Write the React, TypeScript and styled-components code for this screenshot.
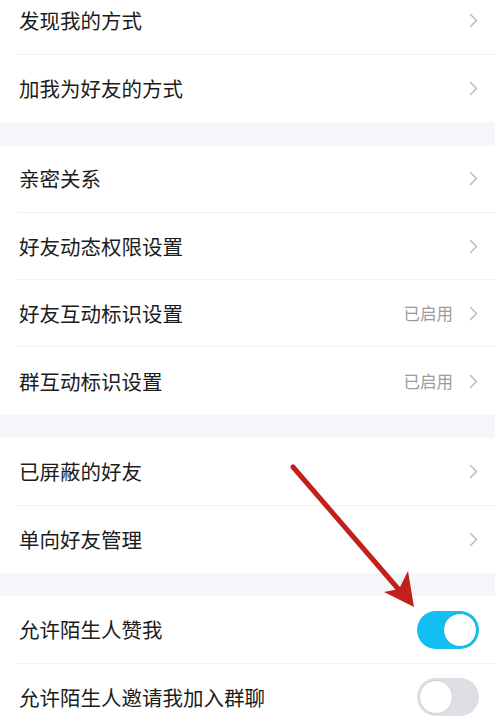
import React from "react";
import styled, { createGlobalStyle } from "styled-components";

const Global = createGlobalStyle`
  html, body { margin: 0; padding: 0; background: #ffffff; overflow: hidden; }
  body { font-family: "Noto Sans CJK SC", "Noto Sans", sans-serif; }
`;

const Page = styled.div`
  position: relative;
  width: 495px;
  height: 728px;
  overflow: hidden;
  background: #ffffff;
`;

const List = styled.div`
  margin-top: -12.5px;
  display: flex;
  flex-direction: column;
`;

const Group = styled.div`
  display: flex;
  flex-direction: column;
  background: #ffffff;
`;

const GroupGap = styled.div`
  height: 23.5px;
  background: #f5f6fa;
`;

const Row = styled.div`
  height: 67.3px;
  padding-left: 18px;
  display: flex;
  box-sizing: border-box;
`;

const RowBody = styled.div<{ $last?: boolean; $toggle?: boolean }>`
  flex: 1;
  display: flex;
  align-items: center;
  padding-left: 1px;
  padding-right: ${p => (p.$toggle ? "16px" : "17px")};
  border-bottom: ${p => (p.$last ? "none" : "1px solid #f0f0f3")};
  box-sizing: border-box;
`;

const Label = styled.span`
  flex: 1;
  font-size: 20.5px;
  color: #1c1c1c;
  padding-bottom: 1px;
`;

const Value = styled.span`
  font-size: 16.5px;
  color: #9b9b9f;
  margin-right: 16px;
  padding-bottom: 1px;
`;

const Track = styled.div<{ $on: boolean }>`
  width: 62px;
  height: 38px;
  border-radius: 19px;
  background: ${p => (p.$on ? "#12bff0" : "#dedee5")};
  display: flex;
  align-items: center;
  justify-content: ${p => (p.$on ? "flex-end" : "flex-start")};
  padding: 2px;
  box-sizing: border-box;
`;

const Knob = styled.div<{ $on: boolean }>`
  width: 34px;
  height: 34px;
  border-radius: 50%;
  background: #ffffff;
  box-sizing: border-box;
  border: 1px solid ${p => (p.$on ? "#0fb3e2" : "#cfcfd6")};
`;

const ArrowLayer = styled.svg`
  position: absolute;
  left: 0;
  top: 0;
  pointer-events: none;
`;

const Chevron = () => (
  <svg width="9" height="15" viewBox="0 0 9 15">
    <polyline
      points="1.5,1.5 7.5,7.5 1.5,13.5"
      fill="none"
      stroke="#bdbdc2"
      strokeWidth="1.6"
      strokeLinecap="round"
      strokeLinejoin="round"
    />
  </svg>
);

type Item = { label: string; value?: string; toggle?: boolean; on?: boolean };

const groups: Item[][] = [
  [{ label: "发现我的方式" }, { label: "加我为好友的方式" }],
  [
    { label: "亲密关系" },
    { label: "好友动态权限设置" },
    { label: "好友互动标识设置", value: "已启用" },
    { label: "群互动标识设置", value: "已启用" },
  ],
  [{ label: "已屏蔽的好友" }, { label: "单向好友管理" }],
  [
    { label: "允许陌生人赞我", toggle: true, on: true },
    { label: "允许陌生人邀请我加入群聊", toggle: true, on: false },
  ],
];

export default function App() {
  return (
    <Page>
      <Global />
      <List>
        {groups.map((g, gi) => (
          <React.Fragment key={gi}>
            {gi > 0 && <GroupGap />}
            <Group>
              {g.map((it, i) => (
                <Row key={it.label}>
                  <RowBody $last={i === g.length - 1} $toggle={it.toggle}>
                    <Label>{it.label}</Label>
                    {it.value && <Value>{it.value}</Value>}
                    {it.toggle ? (
                      <Track $on={!!it.on}>
                        <Knob $on={!!it.on} />
                      </Track>
                    ) : (
                      <Chevron />
                    )}
                  </RowBody>
                </Row>
              ))}
            </Group>
          </React.Fragment>
        ))}
      </List>
      <ArrowLayer width="495" height="728" viewBox="0 0 495 728">
        <line
          x1="293"
          y1="467"
          x2="400"
          y2="591"
          stroke="#c2211b"
          strokeWidth="5"
          strokeLinecap="round"
        />
        <polygon points="414,607 384,592 399,589 408,571" fill="#c2211b" />
      </ArrowLayer>
    </Page>
  );
}
